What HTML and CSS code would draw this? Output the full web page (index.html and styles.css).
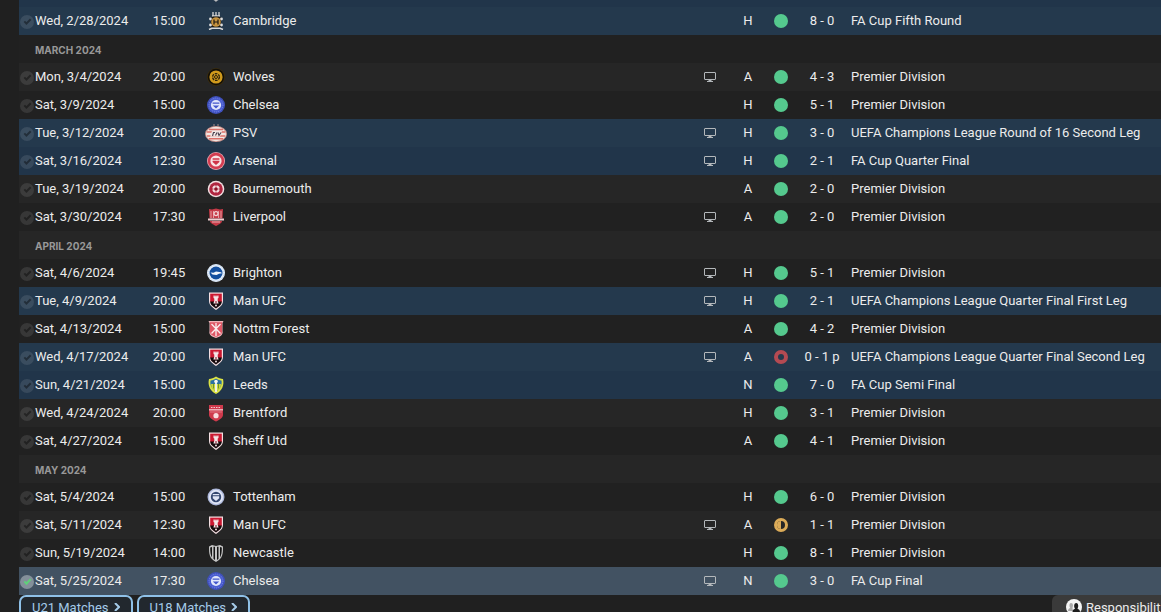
FILE: index.html
```html
<!DOCTYPE html>
<html lang="en">
<head>
    <meta charset="UTF-8">
    <meta name="viewport" content="width=device-width, initial-scale=1.0">
    <title>Fixtures</title>
    <link rel="stylesheet" href="styles.css">
</head>
<body>

<!-- Crests and icons -->
<svg class="sprites" aria-hidden="true">
    <symbol id="crest-book" viewBox="0 0 18 18">
        <path d="M5 3h8v9l-4 6-4-6z" fill="#111"/>
        <path d="M6 15l2 1 1 1 1-1 2-1" fill="none" stroke="#b9bcc0" stroke-width="1.4"/>
    </symbol>
    <symbol id="crest-cambridge" viewBox="0 0 18 18">
        <path d="M6 0v4M9 0v4M12 0v4M5 4h8" fill="none" stroke="#d8d8d8" stroke-width="1.3"/>
        <path d="M3 6l3-1.500h6L15 6l-1 4 1 4-3 1.500H6L3 14l1-4z" fill="#16140f"/>
        <circle cx="3.5" cy="7" r="1.4" fill="#ddd"/>
        <circle cx="14.5" cy="7" r="1.4" fill="#ddd"/>
        <circle cx="3.5" cy="13" r="1.4" fill="#ddd"/>
        <circle cx="14.5" cy="13" r="1.4" fill="#ddd"/>
        <circle cx="9" cy="10" r="4.8" fill="#c99540"/>
        <path d="M7 7.5v5M11 7.5v5M7 10h4" stroke="#1b1710" stroke-width="1.2"/>
        <path d="M2 17.5l3-1.300h8l3 1.300" fill="none" stroke="#d8d8d8" stroke-width="1.6"/>
    </symbol>
    <symbol id="crest-wolves" viewBox="0 0 18 18">
        <circle cx="9" cy="9" r="9" fill="#3c2d0c"/>
        <circle cx="9" cy="9" r="8.2" fill="#120f08"/>
        <circle cx="9" cy="9" r="6.6" fill="#d09a1c"/>
        <circle cx="9" cy="9" r="3.400" fill="none" stroke="#2b210c" stroke-width="1.400" stroke-dasharray="2.600 1"/>
        <circle cx="9" cy="9" r="1.500" fill="none" stroke="#2b210c" stroke-width="1"/>
    </symbol>
    <symbol id="crest-chelsea" viewBox="0 0 18 18">
        <circle cx="9" cy="9" r="9" fill="#3f50bd"/>
        <circle cx="9" cy="9" r="7.2" fill="#4b5ed2"/>
        <circle cx="9" cy="9" r="7" fill="none" stroke="#7786e4" stroke-width="1" stroke-dasharray="1 1"/>
        <circle cx="9" cy="9" r="5.100" fill="#e2e7fb"/>
        <path d="M5.600 6.500h6.800v1.300H5.600zM5.800 9.500h6.400L9 12.600z" fill="#4357cc"/>
    </symbol>
    <symbol id="crest-psv" viewBox="0 0 22 18">
        <path d="M9 0v3M13 0v3" stroke="#a58b8a" stroke-width="1"/>
        <ellipse cx="11" cy="10" rx="11" ry="8" fill="#c9938b"/>
        <ellipse cx="11" cy="10" rx="10" ry="7.2" fill="#f1e6e2"/>
        <path d="M4 5.500h14M2 8h18M2 12h18M4 14.800h14" stroke="#dc7068" stroke-width="1.400"/>
        <path d="M7 7h10l-2 5.800H5z" fill="#f1e6e2"/>
        <path d="M7.500 12l1-3.500h1.500M12 8.500l-1.500 3M13 8.500l1 3 2-3" fill="none" stroke="#4b4350" stroke-width="1.100"/>
    </symbol>
    <symbol id="crest-arsenal" viewBox="0 0 18 18">
        <circle cx="9" cy="9" r="9" fill="#e9a7b0"/>
        <circle cx="9" cy="9" r="8.200" fill="#d33c50"/>
        <circle cx="9" cy="9" r="5.600" fill="#f8e3e5"/>
        <path d="M5.600 6.300h6.800v1.400H5.600zM5.600 8.800h6.800v1.300L9 13l-3.400-2.900z" fill="#cf3448"/>
    </symbol>
    <symbol id="crest-bournemouth" viewBox="0 0 18 18">
        <circle cx="9" cy="9" r="8.300" fill="#f2dfe1"/>
        <circle cx="9" cy="9" r="6.800" fill="#b02640"/>
        <circle cx="9" cy="9" r="2.700" fill="none" stroke="#f2dfe1" stroke-width="2"/>
        <path d="M9 4.500v2M9 11.500v2M4.500 9h2M11.500 9h2" stroke="#b02640" stroke-width="1"/>
        <circle cx="9" cy="9" r="1.600" fill="#8b1428"/>
    </symbol>
    <symbol id="crest-liverpool" viewBox="0 0 18 18">
        <path d="M2 1l3 .5 4-1 4 1 3-.5-.5 9.500H2.500z" fill="#c63a47"/>
        <path d="M4 3v7M14 3v7M6.500 3v7M11.500 3v7" stroke="#eab6ba" stroke-width=".8"/>
        <circle cx="9" cy="5.600" r="2" fill="none" stroke="#f4d3d6" stroke-width="1.200"/>
        <path d="M1 10.500h16v2H1z" fill="#f1cdd0"/>
        <path d="M3 13h12c0 2-3 3.500-6 5-3-1.500-6-3-6-5z" fill="#c63a47"/>
        <path d="M5 14h8" stroke="#f1cdd0" stroke-width=".8"/>
    </symbol>
    <symbol id="crest-brighton" viewBox="0 0 18 18">
        <circle cx="9" cy="9" r="9" fill="#e8f0fa"/>
        <circle cx="9" cy="9" r="8" fill="none" stroke="#a9c9ee" stroke-width=".8" stroke-dasharray="1 1"/>
        <circle cx="9" cy="9" r="6.500" fill="#134f9f"/>
        <path d="M3.500 8.500l3 .2 2.500-1.200 5 .7 1 1-3 .6-2.500 1.200-4-.6z" fill="#f3f7fc"/>
    </symbol>
    <symbol id="crest-united" viewBox="0 0 18 18">
        <path d="M2 0.500h14V9c0 4.500-4 6.700-7 9-3-2.300-7-4.500-7-9z" fill="#f3dfe2"/>
        <path d="M3.200 1.700h11.600V10H3.200z" fill="#cb1831"/>
        <path d="M3.200 9.500h11.600c0 3.300-3 5-5.800 7-2.800-2-5.800-3.700-5.800-7z" fill="#15090b"/>
        <path d="M6.500 3.500h1.200v1h.7v-1h1.200v1h.7v-1h1.200V6l-.8.600v2.200l.9 2.700H6.400l.9-2.700V6.600L6.500 6z" fill="#f5e6e8"/>
        <path d="M8.500 9h1v2.500h-1z" fill="#7c1020"/>
        <circle cx="9" cy="13.500" r="1" fill="#f3dfe2"/>
    </symbol>
    <symbol id="crest-forest" viewBox="0 0 18 18">
        <path d="M1.500 1h15L15.500 3v8c1 4-3 6-6.500 7-3.500-1-7.500-3-6.500-7V3z" fill="#f0b6bb"/>
        <path d="M3 2.200h12v9.300c0 3-3 4.500-6 5.300-3-.8-6-2.300-6-5.300z" fill="#df5765"/>
        <path d="M9 3v13M4.500 4l9 9.500M13.500 4l-9 9.500" stroke="#fbeff0" stroke-width="1.300"/>
    </symbol>
    <symbol id="crest-leeds" viewBox="0 0 18 18">
        <path d="M2 3c2 0 5-1 7-2.500C11 2 14 3 16 3c1.500 6-1 12-7 15C3 15 .5 9 2 3z" fill="#dbe344"/>
        <path d="M3.500 4.500C6 4.200 7.500 3.500 9 2.500c1.500 1 3 1.700 5.500 2 .7 4.500-1 8.500-5.500 11-4.500-2.500-6.200-6.500-5.500-11z" fill="#2a6fa5"/>
        <path d="M4 8h10c0 3-1.300 5.500-5 7.500C5.300 13.500 4 11 4 8z" fill="#cdd73a"/>
        <path d="M6.500 7.500v5M11.500 7.500v5" stroke="#55802a" stroke-width=".8"/>
        <path d="M9 6v10" stroke="#f4f6f0" stroke-width="1.800"/>
        <circle cx="9" cy="5.500" r="1.800" fill="#f4f6f0"/>
    </symbol>
    <symbol id="crest-brentford" viewBox="0 0 18 18">
        <path d="M2 1h14v10c0 3-4 5-7 6.500C6 16 2 14 2 11z" fill="#cf3a4c"/>
        <path d="M2 5.800h14" stroke="#f3cbd0" stroke-width="1.200"/>
        <path d="M4 3.500h10" stroke="#f3cbd0" stroke-width="1" stroke-dasharray="1.500 1"/>
        <path d="M3 8h12" stroke="#e5848f" stroke-width=".8"/>
        <circle cx="9" cy="11.700" r="2.600" fill="#f8dcdf"/>
    </symbol>
    <symbol id="crest-tottenham" viewBox="0 0 18 18">
        <circle cx="9" cy="9" r="8.500" fill="#aeb9dc"/>
        <circle cx="9" cy="9" r="7.200" fill="#dfe5f5"/>
        <circle cx="9" cy="9" r="5.200" fill="#34476f"/>
        <path d="M5.800 6h6.400v1.200H5.800zM5.800 8.200h6.400v2L9 13l-3.200-2.800z" fill="#dfe5f5"/>
    </symbol>
    <symbol id="crest-newcastle" viewBox="0 0 18 18">
        <path d="M2 2.500L5 1l4 1 4-1 3 1.500c0 7 0 12-7 15.500-7-3.500-7-8.500-7-15.500z" fill="#c4c4c4"/>
        <path d="M3.200 3.500c0 5 .4 7.500 1.800 10V3zM14.800 3.500c0 5-.4 7.500-1.800 10V3zM6.500 2.800v12l1.500 1.300V2.800zM11.500 2.800v12L10 16.100V2.800z" fill="#141414"/>
    </symbol>
    <symbol id="icon-tv" viewBox="0 0 12 11">
        <path d="M1 1.500h10a.5.5 0 0 1 .5.5v6a.5.5 0 0 1-.5.5H1a.5.5 0 0 1-.5-.5V2a.5.5 0 0 1 .5-.5z" fill="none" stroke="currentColor"/>
        <path d="M4.500 9h3v1H9v1H3v-1h1.500z" fill="currentColor"/>
    </symbol>
    <symbol id="icon-people" viewBox="0 0 16 16">
        <circle cx="8" cy="8" r="8" fill="#f4f4f4"/>
        <path d="M2 12c0-2 1-2.600 2.300-3C3 7 3.300 4 5 4c1.200 0 2 .8 2 2.500L6.500 9l.5 3z" fill="#aaa"/>
        <path d="M6.500 13c0-2.300 1.200-2.800 2.500-3.300C7.600 7.500 8 4 10.200 4S12.800 7.500 11.500 9.700c1.300.5 2.500 1 2.500 3.300z" fill="#1c1c1c"/>
    </symbol>
</svg>

<main class="fixtures">
    <table class="fixture-table">
        <colgroup>
            <col class="col-check">
            <col class="col-date">
            <col class="col-time">
            <col class="col-crest">
            <col class="col-team">
            <col class="col-tv">
            <col class="col-venue">
            <col class="col-result">
            <col class="col-score">
            <col class="col-comp">
        </colgroup>
        <tbody>
            <tr class="cup"><td></td><td></td><td></td><td class="mid"><svg class="crest"><use href="#crest-book"/></svg></td><td></td><td></td><td></td><td></td><td></td><td></td></tr>
            <tr class="cup">
                <td><input type="checkbox" class="tick" aria-label="Wed, 2/28/2024"></td><td>Wed, 2/28/2024</td><td class="mid">15:00</td>
                <td class="mid"><svg class="crest"><use href="#crest-cambridge"/></svg></td><td>Cambridge</td><td class="mid"></td>
                <td class="mid">H</td><td class="mid"><span class="dot win"></span></td><td class="mid">8 - 0</td><td>FA Cup Fifth Round</td>
            </tr>
            <tr class="month"><th></th><th colspan="9">MARCH 2024</th></tr>
            <tr>
                <td><input type="checkbox" class="tick" aria-label="Mon, 3/4/2024"></td><td>Mon, 3/4/2024</td><td class="mid">20:00</td>
                <td class="mid"><svg class="crest"><use href="#crest-wolves"/></svg></td><td>Wolves</td><td class="mid"><svg class="tv"><use href="#icon-tv"/></svg></td>
                <td class="mid">A</td><td class="mid"><span class="dot win"></span></td><td class="mid">4 - 3</td><td>Premier Division</td>
            </tr>
            <tr>
                <td><input type="checkbox" class="tick" aria-label="Sat, 3/9/2024"></td><td>Sat, 3/9/2024</td><td class="mid">15:00</td>
                <td class="mid"><svg class="crest"><use href="#crest-chelsea"/></svg></td><td>Chelsea</td><td class="mid"></td>
                <td class="mid">H</td><td class="mid"><span class="dot win"></span></td><td class="mid">5 - 1</td><td>Premier Division</td>
            </tr>
            <tr class="cup">
                <td><input type="checkbox" class="tick" aria-label="Tue, 3/12/2024"></td><td>Tue, 3/12/2024</td><td class="mid">20:00</td>
                <td class="mid"><svg class="crest wide"><use href="#crest-psv"/></svg></td><td>PSV</td><td class="mid"><svg class="tv"><use href="#icon-tv"/></svg></td>
                <td class="mid">H</td><td class="mid"><span class="dot win"></span></td><td class="mid">3 - 0</td><td>UEFA Champions League Round of 16 Second Leg</td>
            </tr>
            <tr class="cup">
                <td><input type="checkbox" class="tick" aria-label="Sat, 3/16/2024"></td><td>Sat, 3/16/2024</td><td class="mid">12:30</td>
                <td class="mid"><svg class="crest"><use href="#crest-arsenal"/></svg></td><td>Arsenal</td><td class="mid"><svg class="tv"><use href="#icon-tv"/></svg></td>
                <td class="mid">H</td><td class="mid"><span class="dot win"></span></td><td class="mid">2 - 1</td><td>FA Cup Quarter Final</td>
            </tr>
            <tr>
                <td><input type="checkbox" class="tick" aria-label="Tue, 3/19/2024"></td><td>Tue, 3/19/2024</td><td class="mid">20:00</td>
                <td class="mid"><svg class="crest"><use href="#crest-bournemouth"/></svg></td><td>Bournemouth</td><td class="mid"></td>
                <td class="mid">A</td><td class="mid"><span class="dot win"></span></td><td class="mid">2 - 0</td><td>Premier Division</td>
            </tr>
            <tr>
                <td><input type="checkbox" class="tick" aria-label="Sat, 3/30/2024"></td><td>Sat, 3/30/2024</td><td class="mid">17:30</td>
                <td class="mid"><svg class="crest"><use href="#crest-liverpool"/></svg></td><td>Liverpool</td><td class="mid"><svg class="tv"><use href="#icon-tv"/></svg></td>
                <td class="mid">A</td><td class="mid"><span class="dot win"></span></td><td class="mid">2 - 0</td><td>Premier Division</td>
            </tr>
            <tr class="month"><th></th><th colspan="9">APRIL 2024</th></tr>
            <tr>
                <td><input type="checkbox" class="tick" aria-label="Sat, 4/6/2024"></td><td>Sat, 4/6/2024</td><td class="mid">19:45</td>
                <td class="mid"><svg class="crest"><use href="#crest-brighton"/></svg></td><td>Brighton</td><td class="mid"><svg class="tv"><use href="#icon-tv"/></svg></td>
                <td class="mid">H</td><td class="mid"><span class="dot win"></span></td><td class="mid">5 - 1</td><td>Premier Division</td>
            </tr>
            <tr class="cup">
                <td><input type="checkbox" class="tick" aria-label="Tue, 4/9/2024"></td><td>Tue, 4/9/2024</td><td class="mid">20:00</td>
                <td class="mid"><svg class="crest"><use href="#crest-united"/></svg></td><td>Man UFC</td><td class="mid"><svg class="tv"><use href="#icon-tv"/></svg></td>
                <td class="mid">H</td><td class="mid"><span class="dot win"></span></td><td class="mid">2 - 1</td><td>UEFA Champions League Quarter Final First Leg</td>
            </tr>
            <tr>
                <td><input type="checkbox" class="tick" aria-label="Sat, 4/13/2024"></td><td>Sat, 4/13/2024</td><td class="mid">15:00</td>
                <td class="mid"><svg class="crest"><use href="#crest-forest"/></svg></td><td>Nottm Forest</td><td class="mid"></td>
                <td class="mid">A</td><td class="mid"><span class="dot win"></span></td><td class="mid">4 - 2</td><td>Premier Division</td>
            </tr>
            <tr class="cup">
                <td><input type="checkbox" class="tick" aria-label="Wed, 4/17/2024"></td><td>Wed, 4/17/2024</td><td class="mid">20:00</td>
                <td class="mid"><svg class="crest"><use href="#crest-united"/></svg></td><td>Man UFC</td><td class="mid"><svg class="tv"><use href="#icon-tv"/></svg></td>
                <td class="mid">A</td><td class="mid"><span class="dot loss"></span></td><td class="mid">0 - 1 p</td><td>UEFA Champions League Quarter Final Second Leg</td>
            </tr>
            <tr class="cup">
                <td><input type="checkbox" class="tick" aria-label="Sun, 4/21/2024"></td><td>Sun, 4/21/2024</td><td class="mid">15:00</td>
                <td class="mid"><svg class="crest"><use href="#crest-leeds"/></svg></td><td>Leeds</td><td class="mid"></td>
                <td class="mid">N</td><td class="mid"><span class="dot win"></span></td><td class="mid">7 - 0</td><td>FA Cup Semi Final</td>
            </tr>
            <tr>
                <td><input type="checkbox" class="tick" aria-label="Wed, 4/24/2024"></td><td>Wed, 4/24/2024</td><td class="mid">20:00</td>
                <td class="mid"><svg class="crest"><use href="#crest-brentford"/></svg></td><td>Brentford</td><td class="mid"></td>
                <td class="mid">H</td><td class="mid"><span class="dot win"></span></td><td class="mid">3 - 1</td><td>Premier Division</td>
            </tr>
            <tr>
                <td><input type="checkbox" class="tick" aria-label="Sat, 4/27/2024"></td><td>Sat, 4/27/2024</td><td class="mid">15:00</td>
                <td class="mid"><svg class="crest"><use href="#crest-united"/></svg></td><td>Sheff Utd</td><td class="mid"></td>
                <td class="mid">A</td><td class="mid"><span class="dot win"></span></td><td class="mid">4 - 1</td><td>Premier Division</td>
            </tr>
            <tr class="month"><th></th><th colspan="9">MAY 2024</th></tr>
            <tr>
                <td><input type="checkbox" class="tick" aria-label="Sat, 5/4/2024"></td><td>Sat, 5/4/2024</td><td class="mid">15:00</td>
                <td class="mid"><svg class="crest"><use href="#crest-tottenham"/></svg></td><td>Tottenham</td><td class="mid"></td>
                <td class="mid">H</td><td class="mid"><span class="dot win"></span></td><td class="mid">6 - 0</td><td>Premier Division</td>
            </tr>
            <tr>
                <td><input type="checkbox" class="tick" aria-label="Sat, 5/11/2024"></td><td>Sat, 5/11/2024</td><td class="mid">12:30</td>
                <td class="mid"><svg class="crest"><use href="#crest-united"/></svg></td><td>Man UFC</td><td class="mid"><svg class="tv"><use href="#icon-tv"/></svg></td>
                <td class="mid">A</td><td class="mid"><span class="dot draw"></span></td><td class="mid">1 - 1</td><td>Premier Division</td>
            </tr>
            <tr>
                <td><input type="checkbox" class="tick" aria-label="Sun, 5/19/2024"></td><td>Sun, 5/19/2024</td><td class="mid">14:00</td>
                <td class="mid"><svg class="crest"><use href="#crest-newcastle"/></svg></td><td>Newcastle</td><td class="mid"></td>
                <td class="mid">H</td><td class="mid"><span class="dot win"></span></td><td class="mid">8 - 1</td><td>Premier Division</td>
            </tr>
            <tr class="selected">
                <td><input type="checkbox" class="tick" aria-label="Sat, 5/25/2024" checked></td><td>Sat, 5/25/2024</td><td class="mid">17:30</td>
                <td class="mid"><svg class="crest"><use href="#crest-chelsea"/></svg></td><td>Chelsea</td><td class="mid"><svg class="tv"><use href="#icon-tv"/></svg></td>
                <td class="mid">N</td><td class="mid"><span class="dot win"></span></td><td class="mid">3 - 0</td><td>FA Cup Final</td>
            </tr>
        </tbody>
    </table>
</main>

<footer class="actions">
    <button class="outline-button">U21 Matches <svg class="chevron" viewBox="0 0 6 8"><path d="M1 0l4 4-4 4" fill="none" stroke="currentColor" stroke-width="2"/></svg></button>
    <button class="outline-button">U18 Matches <svg class="chevron" viewBox="0 0 6 8"><path d="M1 0l4 4-4 4" fill="none" stroke="currentColor" stroke-width="2"/></svg></button>
    <button class="duties-button"><svg class="people"><use href="#icon-people"/></svg>Responsibilities</button>
</footer>

</body>
</html>
```
FILE: styles.css
```css
* {
    box-sizing: border-box;
}

body {
    margin: 0;
    height: 100vh;
    overflow: hidden;
    display: grid;
    grid-template-rows: 1fr 17px;
    background: #202020;
    color: #ececec;
    font-family: Roboto, "Liberation Sans", sans-serif;
    font-size: 13px;
}

.sprites {
    display: none;
}

/* List is scrolled to its end */
.fixtures {
    min-height: 0;
    padding-left: 19px;
    overflow: hidden;
    display: flex;
    flex-direction: column;
    justify-content: flex-end;
}

.fixture-table {
    width: 100%;
    flex: none;
    table-layout: fixed;
    border-collapse: collapse;
}

.col-check { width: 16px; }
.col-date { width: 104px; }
.col-time { width: 60px; }
.col-crest { width: 34px; }
.col-tv { width: 44px; }
.col-venue { width: 32px; }
.col-result { width: 34px; }
.col-score { width: 48px; }
.col-comp { width: 315px; }

tr {
    height: 28px;
    background: #212121;
}

tr:nth-child(even) {
    background: #262626;
}

td, th {
    padding: 0;
    line-height: 16px;
    text-align: left;
    white-space: nowrap;
}

td:last-child {
    padding-left: 5px;
}

td.mid {
    text-align: center;
}

tr.cup {
    background: #21354a;
}

tr.cup:nth-child(even) {
    background: #24394d;
}

tr.selected,
tr.selected:nth-child(even) {
    background: #425262;
}

.month th {
    padding-top: 1px;
    color: #989898;
    font-family: Inter, "Liberation Sans", sans-serif;
    font-size: 10px;
    font-weight: 700;
}

.tick {
    appearance: none;
    display: grid;
    place-items: center;
    width: 14px;
    height: 14px;
    margin: 1px 0 0 1px;
    border-radius: 50%;
    background: rgba(255, 255, 255, 0.1);
    color: rgba(0, 0, 0, 0.4);
}

.tick::after {
    content: "";
    width: 5px;
    height: 2px;
    margin-bottom: 2px;
    border-left: 2px solid;
    border-bottom: 2px solid;
    transform: rotate(-45deg);
}

.tick:checked {
    background: #84909a;
    color: #5fd07a;
}

.crest {
    display: block;
    width: 18px;
    height: 18px;
    margin: 0 auto;
}

.crest.wide {
    width: 22px;
}

.tv {
    display: block;
    width: 12px;
    height: 11px;
    margin: 0 auto 1px;
    color: #b4b8bb;
}

.dot {
    display: block;
    width: 14px;
    height: 14px;
    margin: 0 auto;
    border-radius: 50%;
}

.win {
    background: #55c98e;
}

.loss {
    border: 4px solid #b44a52;
}

.draw {
    border: 3px solid #dbab58;
    background: linear-gradient(90deg, #dbab58 50%, #262626 50%) padding-box;
}

.actions {
    display: flex;
    align-items: flex-start;
    gap: 4px;
    padding-left: 19px;
}

button {
    flex: none;
    display: flex;
    align-items: center;
    height: 24px;
    font: inherit;
    white-space: nowrap;
}

.outline-button {
    gap: 5px;
    padding: 0 11px;
    border: 2px solid #8fc1e8;
    border-radius: 7px;
    background: #22282e;
    color: #a5cbe9;
}

.chevron {
    width: 6px;
    height: 8px;
}

.duties-button {
    width: 109px;
    margin-left: auto;
    gap: 4px;
    padding: 0 0 0 14px;
    overflow: hidden;
    border: 0;
    border-radius: 6px 0 0 0;
    background: #3a3a3a;
    color: #ececec;
}

.people {
    flex: none;
    width: 16px;
    height: 16px;
}
```
